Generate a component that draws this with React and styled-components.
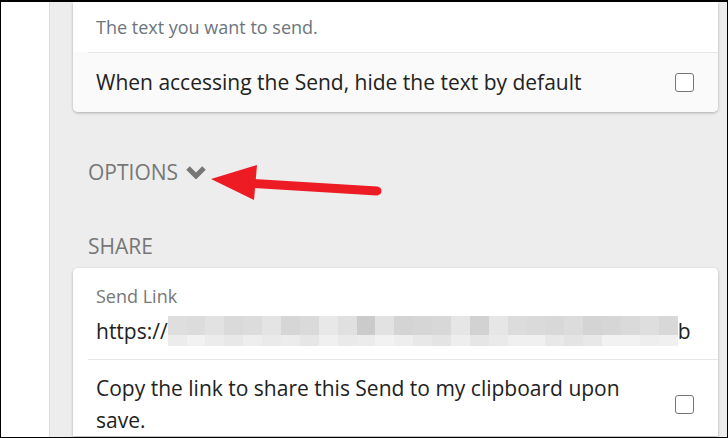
import React from "react";
import styled, { createGlobalStyle } from "styled-components";

const GlobalStyle = createGlobalStyle`
  html, body {
    margin: 0;
    padding: 0;
    background: #fff;
  }
  body {
    font-family: "Open Sans", "Liberation Sans", sans-serif;
  }
`;

const Frame = styled.div`
  position: relative;
  width: 728px;
  height: 438px;
  box-sizing: border-box;
  border: 1px solid #000;
  border-top-width: 2px;
  display: flex;
  overflow: hidden;
`;

const Sidebar = styled.div`
  width: 48px;
  flex: none;
  background: #fff;
  border-right: 1px solid #dcdcdc;
`;

const Main = styled.div`
  flex: 1;
  background: #ededed;
  padding: 0 9px 0 23px;
  display: flex;
  flex-direction: column;
`;

const Card = styled.div`
  background: #fff;
  border-radius: ${(p) => (p.$cut ? "0 0 5px 5px" : "5px 5px 0 0")};
  box-shadow: 0 1px 3px rgba(0, 0, 0, 0.28);
  overflow: hidden;
`;

const Row = styled.div`
  position: relative;
  display: flex;
  align-items: center;
  gap: 20px;
  padding: ${(p) => p.$pad || "0 24px 0 23px"};
  background: ${(p) => (p.$muted ? "#fafafa" : "#fff")};
  min-height: ${(p) => p.$h || 0}px;
  box-sizing: border-box;

  ${(p) =>
    p.$divider &&
    `
    &::before {
      content: "";
      position: absolute;
      left: 15px;
      right: 0;
      top: 0;
      height: 1px;
      background: #e6e6e6;
    }
  `}
`;

const Hint = styled.div`
  font-size: 18px;
  line-height: 25px;
  color: #6c757d;
`;

const Label = styled.div`
  flex: 1;
  font-size: 21px;
  line-height: 32px;
  color: #222;
`;

const Checkbox = styled.span`
  flex: none;
  width: 17px;
  height: 17px;
  border: 1px solid #767676;
  border-radius: 3px;
  background: #fff;
`;

const Section = styled.div`
  display: flex;
  align-items: center;
  gap: 7px;
  height: 28px;
  margin: ${(p) => p.$margin};
  padding-left: 15px;
  font-size: 21px;
  color: #777;
  text-transform: uppercase;
`;

const Field = styled.div`
  flex: 1;
  display: flex;
  flex-direction: column;
`;

const FieldLabel = styled.div`
  font-size: 18px;
  color: #777;
  line-height: 24px;
`;

const LinkLine = styled.div`
  display: flex;
  align-items: center;
  height: 46px;
  font-size: 21px;
  color: #222;
  white-space: nowrap;
  overflow: hidden;
`;

const Mosaic = styled.div`
  display: grid;
  grid-template-columns: repeat(27, 1fr);
  grid-template-rows: 19px 11px;
  width: 510px;
  flex: none;
`;

const Cell = styled.span`
  background: ${(p) => p.$shade};
`;

const Tail = styled.span`
  width: 14px;
  overflow: hidden;
`;

const Arrow = styled.svg`
  position: absolute;
  left: 205px;
  top: 156px;
`;

const topShades = [
  "#dedede", "#dcdcdc", "#e2e2e2", "#dadada", "#dcdcdc", "#e4e4e4", "#d6d6d6",
  "#dadada", "#e8e8e8", "#e0e0e0", "#cbcbcb", "#e2e2e2", "#d4d4d4", "#d6d6d6",
  "#d8d8d8", "#e6e6e6", "#d2d2d2", "#e6e6e6", "#dcdcdc", "#dadada", "#d8d8d8",
  "#dcdcdc", "#d4d4d4", "#d6d6d6", "#dadada", "#dedede", "#d8d8d8",
];
const bottomShades = [
  "#ececec", "#f2f2f2", "#ececec", "#e8e8e8", "#eeeeee", "#eaeaea", "#ececec",
  "#e6e6e6", "#f0f0f0", "#eaeaea", "#ececec", "#f2f2f2", "#eeeeee", "#e8e8e8",
  "#e4e4e4", "#eeeeee", "#e6e6e6", "#eaeaea", "#f0f0f0", "#f0f0f0", "#e8e8e8",
  "#e4e4e4", "#e8e8e8", "#f2f2f2", "#f2f2f2", "#eeeeee", "#f0f0f0",
];

const Chevron = () => (
  <svg width="22" height="14" viewBox="0 0 22 14">
    <polyline
      points="3,3 11,11 19,3"
      fill="none"
      stroke="#777"
      strokeWidth="5"
      strokeLinejoin="miter"
    />
  </svg>
);

const App = () => {
  return (
    <>
      <GlobalStyle />
      <Frame>
        <Sidebar />
        <Main>
          <Card $cut>
            <Row $h={50} $pad="13px 24px 12px 23px">
              <Hint>The text you want to send.</Hint>
            </Row>
            <Row $h={60} $muted $divider>
              <Label>When accessing the Send, hide the text by default</Label>
              <Checkbox />
            </Row>
          </Card>
          <Section $margin="46px 0 0">
            Options <Chevron />
          </Section>
          <Section $margin="46px 0 8px">Share</Section>
          <Card>
            <Row $pad="16px 0 5px 23px">
              <Field>
                <FieldLabel>Send Link</FieldLabel>
                <LinkLine>
                  https://
                  <Mosaic>
                    {topShades.map((c, i) => (
                      <Cell key={"t" + i} $shade={c} />
                    ))}
                    {bottomShades.map((c, i) => (
                      <Cell key={"b" + i} $shade={c} />
                    ))}
                  </Mosaic>
                  <Tail>b.</Tail>
                </LinkLine>
              </Field>
            </Row>
            <Row $divider $pad="13px 24px 0 23px">
              <Label>Copy the link to share this Send to my clipboard upon save.</Label>
              <Checkbox />
            </Row>
          </Card>
        </Main>
        <Arrow width="180" height="50" viewBox="0 0 180 50">
          <line x1="40" y1="25" x2="171" y2="33" stroke="#ed1c24" strokeWidth="9" strokeLinecap="round" />
          <polygon points="5,21 51,7 48,42" fill="#ed1c24" />
        </Arrow>
      </Frame>
    </>
  );
};

export default App;
